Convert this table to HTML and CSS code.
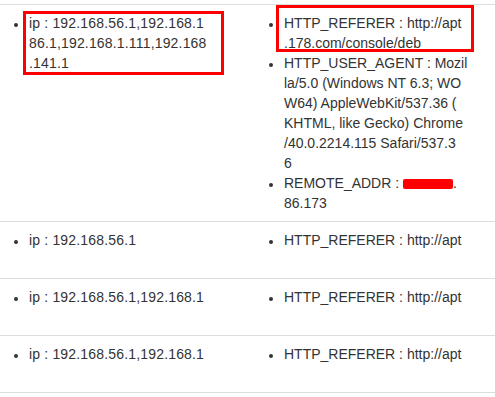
FILE: index.html
```html
<!DOCTYPE html>
<html>
<head>
<meta charset="utf-8">
<link rel="stylesheet" href="styles.css">
</head>
<body>
<div class="page">
  <div class="table">
    <div class="row">
      <div class="cell">
        <ul class="list">
          <li class="num">ip : 192.168.56.1,192.168.1<br>86.1,192.168.1.111,192.168<br>.141.1</li>
        </ul>
      </div>
      <div class="cell">
        <ul class="list">
          <li>HTTP_REFERER : http://apt<br>.178.com/console/deb</li>
          <li>HTTP_USER_AGENT : Mozil<br>la/5.0 (Windows NT 6.3; WO<br>W64) AppleWebKit/537.36 (<br>KHTML, like Gecko) Chrome<br>/40.0.2214.115 Safari/537.3<br>6</li>
          <li>REMOTE_ADDR : <span class="redact"></span>.<br>86.173</li>
        </ul>
      </div>
    </div>
    <div class="row row-short">
      <div class="cell"><ul class="list"><li class="num">ip : 192.168.56.1</li></ul></div>
      <div class="cell"><ul class="list"><li>HTTP_REFERER : http://apt</li></ul></div>
    </div>
    <div class="row row-short">
      <div class="cell"><ul class="list"><li class="num">ip : 192.168.56.1,192.168.1</li></ul></div>
      <div class="cell"><ul class="list"><li>HTTP_REFERER : http://apt</li></ul></div>
    </div>
    <div class="row row-short">
      <div class="cell"><ul class="list"><li class="num">ip : 192.168.56.1,192.168.1</li></ul></div>
      <div class="cell"><ul class="list"><li>HTTP_REFERER : http://apt</li></ul></div>
    </div>
  </div>
  <div class="mark mark-left"></div>
  <div class="mark mark-right"></div>
</div>
</body>
</html>
```
FILE: styles.css
```css
html, body {
  margin: 0;
  padding: 0;
  overflow: hidden;
  background: #fff;
}
body {
  font-family: "Liberation Sans", Arial, sans-serif;
  font-size: 14px;
  line-height: 20px;
  color: #333;
}
.page {
  position: relative;
  padding-top: 4px;
  width: 510px;
}
.table {
  border-bottom: 1px solid #ddd;
}
.row {
  display: grid;
  grid-template-columns: 255px 255px;
  border-top: 1px solid #ddd;
}
.cell {
  padding: 8px;
  box-sizing: border-box;
}
.row-short .cell {
  min-height: 56px;
}
.list {
  margin: 0;
  padding-left: 21px;
  white-space: nowrap;
  list-style: none;
}
.list li {
  position: relative;
}
.list li::before {
  content: "";
  position: absolute;
  left: -15px;
  top: 10px;
  width: 4px;
  height: 4px;
  border-radius: 50%;
  background: #333;
}
.num {
  letter-spacing: 0.17px;
}
.redact {
  display: inline-block;
  width: 50px;
  height: 10px;
  background: #f00;
  border-radius: 2px;
  vertical-align: -1px;
}
.mark {
  position: absolute;
  border: 3px solid #f00;
  box-sizing: border-box;
}
.mark-left {
  left: 23px;
  top: 11px;
  width: 201px;
  height: 64px;
}
.mark-right {
  left: 276px;
  top: 5px;
  width: 198px;
  height: 47px;
}
```
